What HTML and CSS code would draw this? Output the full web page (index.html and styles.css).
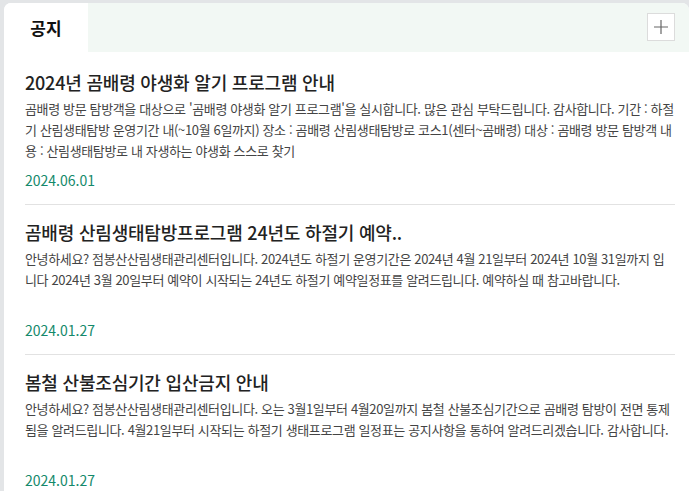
FILE: index.html
```html
<!DOCTYPE html>
<html lang="ko">
<head>
    <meta charset="UTF-8">
    <meta name="viewport" content="width=device-width, initial-scale=1.0">
    <title>공지</title>
    <link rel="stylesheet" href="styles.css">
</head>
<body>
    <div class="board">
        <div class="board-head">
            <div class="tab active">공지</div>
            <div class="tab-rest">
                <a class="more-btn" href="#" aria-label="더보기">
                    <svg width="16" height="16" viewBox="0 0 16 16"><path d="M8 1v14M1 8h14" stroke="#666" stroke-width="1.2" fill="none"/></svg>
                </a>
            </div>
        </div>
        <ul class="notice-list">
            <li class="notice">
                <h3 class="notice-title">2024년 곰배령 야생화 알기 프로그램 안내</h3>
                <p class="notice-body">곰배령 방문 탐방객을 대상으로 '곰배령 야생화 알기 프로그램'을 실시합니다. 많은 관심 부탁드립니다. 감사합니다. 기간 : 하절기 산림생태탐방 운영기간 내(~10월 6일까지) 장소 : 곰배령 산림생태탐방로 코스1(센터~곰배령) 대상 : 곰배령 방문 탐방객 내용 : 산림생태탐방로 내 자생하는 야생화 스스로 찾기</p>
                <span class="notice-date">2024.06.01</span>
            </li>
            <li class="notice">
                <h3 class="notice-title">곰배령 산림생태탐방프로그램 24년도 하절기 예약..</h3>
                <p class="notice-body">안녕하세요? 점봉산산림생태관리센터입니다. 2024년도 하절기 운영기간은 2024년 4월 21일부터 2024년 10월 31일까지 입니다 2024년 3월 20일부터 예약이 시작되는 24년도 하절기 예약일정표를 알려드립니다. 예약하실 때 참고바랍니다.</p>
                <span class="notice-date">2024.01.27</span>
            </li>
            <li class="notice">
                <h3 class="notice-title">봄철 산불조심기간 입산금지 안내</h3>
                <p class="notice-body">안녕하세요? 점봉산산림생태관리센터입니다. 오는 3월1일부터 4월20일까지 봄철 산불조심기간으로 곰배령 탐방이 전면 통제됨을 알려드립니다. 4월21일부터 시작되는 하절기 생태프로그램 일정표는 공지사항을 통하여 알려드리겠습니다. 감사합니다.</p>
                <span class="notice-date">2024.01.27</span>
            </li>
        </ul>
    </div>
</body>
</html>
```

FILE: styles.css
```css
body {
    margin: 0;
    background: #e3e5e7;
    font-family: "Noto Sans CJK KR", "Noto Sans", sans-serif;
    color: #222;
}
.board {
    margin: 3px 0 0 4px;
    background: #fff;
    border-radius: 7px 7px 0 0;
    overflow: hidden;
    height: 488px;
}
.board-head {
    display: flex;
    height: 49px;
}
.tab {
    width: 84px;
    display: flex;
    align-items: center;
    justify-content: center;
    font-size: 17px;
    font-weight: 700;
    color: #111;
    background: #fff;
}
.tab-rest {
    flex: 1;
    background: #f2f8f4;
    display: flex;
    align-items: center;
    justify-content: flex-end;
    padding-right: 14px;
}
.more-btn {
    width: 28px;
    height: 28px;
    box-sizing: border-box;
    border: 1px solid #dcdcdc;
    background: #fff;
    display: flex;
    align-items: center;
    justify-content: center;
    margin-top: -1px;
}
.notice-list {
    list-style: none;
    margin: 0;
    padding: 3px 14px 0 21px;
}
.notice {
    padding: 15px 0 14px;
    border-top: 1px solid #e2e2e2;
}
.notice:first-child {
    border-top: none;
}
.notice-title {
    margin: 0;
    font-size: 18px;
    line-height: 24px;
    font-weight: 500;
    color: #222;
    letter-spacing: -0.2px;
}
.notice-body {
    margin: 4px 0 0;
    font-size: 13px;
    line-height: 21px;
    height: 63px;
    overflow: hidden;
    color: #444;
    letter-spacing: -0.36px;
}
.notice-date {
    display: block;
    margin-top: 9px;
    font-size: 14px;
    line-height: 20px;
    color: #14896b;
}
```
